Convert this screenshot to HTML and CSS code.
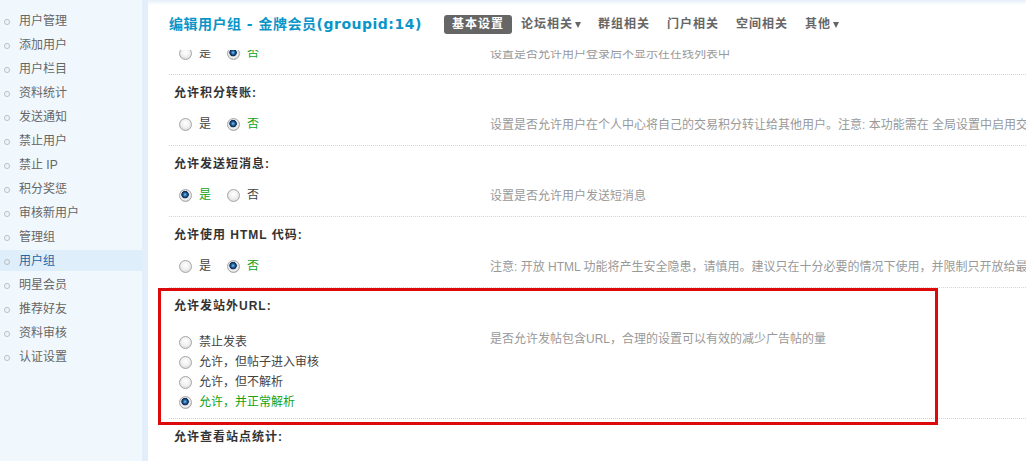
FILE: index.html
```html
<!DOCTYPE html>
<html lang="zh-CN">
<head>
<meta charset="utf-8">
<title>编辑用户组</title>
<link rel="stylesheet" href="styles.css">
</head>
<body>
<div class="app">
  <aside class="side">
    <ul class="menu">
      <li>用户管理</li>
      <li>添加用户</li>
      <li>用户栏目</li>
      <li>资料统计</li>
      <li>发送通知</li>
      <li>禁止用户</li>
      <li>禁止 IP</li>
      <li>积分奖惩</li>
      <li>审核新用户</li>
      <li>管理组</li>
      <li class="on">用户组</li>
      <li>明星会员</li>
      <li>推荐好友</li>
      <li>资料审核</li>
      <li>认证设置</li>
    </ul>
  </aside>
  <main class="main">
    <header class="head">
      <h3 class="title">编辑用户组 - 金牌会员(groupid:14)</h3>
      <nav class="tabs">
        <span class="tab on">基本设置</span>
        <span class="tab">论坛相关<i class="caret"></i></span>
        <span class="tab">群组相关</span>
        <span class="tab">门户相关</span>
        <span class="tab">空间相关</span>
        <span class="tab">其他<i class="caret"></i></span>
      </nav>
    </header>
    <div class="body">
      <div class="list">
        <div class="row">
          <div class="opts">
            <label class="opt"><input class="rd" type="radio" name="r0">是</label>
            <label class="opt ok"><input class="rd" type="radio" name="r0" checked>否</label>
          </div>
          <div class="tips">设置是否允许用户登录后不显示在在线列表中</div>
        </div>

        <div class="label">允许积分转账:</div>
        <div class="row">
          <div class="opts">
            <label class="opt"><input class="rd" type="radio" name="r1">是</label>
            <label class="opt ok"><input class="rd" type="radio" name="r1" checked>否</label>
          </div>
          <div class="tips">设置是否允许用户在个人中心将自己的交易积分转让给其他用户。注意: 本功能需在 全局设置中启用交易积分后才可使用</div>
        </div>

        <div class="label">允许发送短消息:</div>
        <div class="row">
          <div class="opts">
            <label class="opt ok"><input class="rd" type="radio" name="r2" checked>是</label>
            <label class="opt"><input class="rd" type="radio" name="r2">否</label>
          </div>
          <div class="tips">设置是否允许用户发送短消息</div>
        </div>

        <div class="label">允许使用 HTML 代码:</div>
        <div class="row">
          <div class="opts">
            <label class="opt"><input class="rd" type="radio" name="r3">是</label>
            <label class="opt ok"><input class="rd" type="radio" name="r3" checked>否</label>
          </div>
          <div class="tips">注意: 开放 HTML 功能将产生安全隐患，请慎用。建议只在十分必要的情况下使用，并限制只开放给最高管理组</div>
        </div>

        <div class="label">允许发站外URL:</div>
        <div class="row tall">
          <ul class="opts vlist">
            <li><label class="opt"><input class="rd" type="radio" name="r4">禁止发表</label></li>
            <li><label class="opt"><input class="rd" type="radio" name="r4">允许，但帖子进入审核</label></li>
            <li><label class="opt"><input class="rd" type="radio" name="r4">允许，但不解析</label></li>
            <li><label class="opt ok"><input class="rd" type="radio" name="r4" checked>允许，并正常解析</label></li>
          </ul>
          <div class="tips tips-tall">是否允许发帖包含URL，合理的设置可以有效的减少广告帖的量</div>
        </div>

        <div class="label">允许查看站点统计:</div>
        <div class="row">
          <div class="opts">
            <label class="opt ok"><input class="rd" type="radio" name="r5" checked>是</label>
            <label class="opt"><input class="rd" type="radio" name="r5">否</label>
          </div>
          <div class="tips">设置是否允许用户查看站点统计</div>
        </div>
      </div>
    </div>
  </main>
  <div class="mark"></div>
</div>
</body>
</html>
```
FILE: styles.css
```css
html, body {
  margin: 0;
  padding: 0;
  height: 100%;
  overflow: hidden;
  background: #fff;
}

body {
  font: 12px/18px "Liberation Sans", "Noto Sans CJK SC", sans-serif;
  color: #333;
}

.app {
  position: relative;
  display: flex;
  width: 1026px;
  height: 461px;
}

/* sidebar */
.side {
  width: 142px;
  flex: none;
  background: #f1f8fd;
  border-right: 6px solid #e2eef9;
}

.menu {
  list-style: none;
  margin: 0;
  padding: 10px 0 0;
}

.menu li {
  display: flex;
  align-items: center;
  height: 19px;
  padding-top: 2px;
  margin-bottom: 3px;
  line-height: 19px;
  color: #666;
  white-space: nowrap;
}

.menu li::before {
  content: "";
  flex: none;
  width: 4px;
  height: 4px;
  margin: 0 9px 0 4px;
  border: 1px solid #bdbdbd;
  border-radius: 50%;
}

.menu li.on {
  background: #deeefa;
  color: #2366a8;
}

/* main */
.main {
  flex: 1;
  min-width: 0;
  display: flex;
  flex-direction: column;
  overflow: hidden;
}

.head {
  flex: none;
  height: 48px;
  padding: 0 0 2px 21px;
  display: flex;
  align-items: center;
  background: linear-gradient(#e6f0fa, #fff 5px);
}

.title {
  flex: none;
  width: 275px;
  margin: 0;
  font: bold 14px/20px "DejaVu Sans", "Noto Sans CJK SC", sans-serif;
  letter-spacing: 0.5px;
  color: #0a95c9;
  white-space: nowrap;
}

.tabs {
  display: flex;
  align-items: center;
  gap: 1px;
}

.tab {
  display: flex;
  align-items: center;
  height: 19px;
  padding: 0 8px;
  line-height: 19px;
  font-weight: bold;
  letter-spacing: 1px;
  color: #666;
  white-space: nowrap;
}

.tab.on {
  background: #666;
  color: #fff;
  border-radius: 3px;
}

.caret {
  width: 0;
  height: 0;
  margin: 1px 0 0 2px;
  border-left: 3.5px solid transparent;
  border-right: 3.5px solid transparent;
  border-top: 6px solid #666;
}

/* settings list */
.body {
  flex: 1;
  overflow: hidden;
  margin-left: 21px;
}

.list {
  margin-top: -20px;
}

.label {
  box-sizing: border-box;
  height: 26px;
  padding: 9px 0 0 5px;
  line-height: 18px;
  font-weight: bold;
  letter-spacing: 1px;
  color: #333;
  white-space: nowrap;
}

.row {
  display: flex;
  height: 44px;
  border-bottom: 1px dotted #d4d4d4;
}

.row.tall {
  height: auto;
  padding-bottom: 6px;
}

.opts {
  flex: none;
  box-sizing: border-box;
  width: 316px;
  padding: 14px 0 0 5px;
  display: flex;
  align-items: flex-start;
}

.vlist {
  display: block;
  list-style: none;
  margin: 0;
  padding: 18px 0 0 5px;
}

.vlist li {
  height: 20px;
  line-height: 20px;
  display: flex;
  align-items: center;
}

.opt {
  display: inline-flex;
  align-items: center;
  height: 18px;
  margin-right: 11px;
  color: #444;
  white-space: nowrap;
}

.vlist .opt {
  height: 20px;
}

.opt.ok {
  color: #13a313;
}

.rd {
  -webkit-appearance: none;
  appearance: none;
  flex: none;
  box-sizing: border-box;
  width: 13px;
  height: 13px;
  margin: 0 7px 0 5px;
  border: 1px solid #a6a6a6;
  border-radius: 50%;
  background: radial-gradient(circle at 50% 40%, #fff 0, #f1f1f1 45%, #cfcfcf 100%);
}

.rd:checked {
  background: radial-gradient(circle at 46% 42%, #8fd0f2 0, #2c74b4 1.4px, #12386a 2.8px, #0c2c55 3.4px, #d8d8d8 4px, #f3f3f3 5px, #cdcdcd 6.5px);
}

.tips {
  padding: 15px 0 0 5px;
  color: #999;
  white-space: nowrap;
}

.tips-tall {
  padding-top: 16px;
}

/* annotation rectangle drawn over the page */
.mark {
  position: absolute;
  left: 158px;
  top: 288px;
  width: 780px;
  height: 137px;
  box-sizing: border-box;
  border: 3px solid #dc0a0a;
  pointer-events: none;
}
```
